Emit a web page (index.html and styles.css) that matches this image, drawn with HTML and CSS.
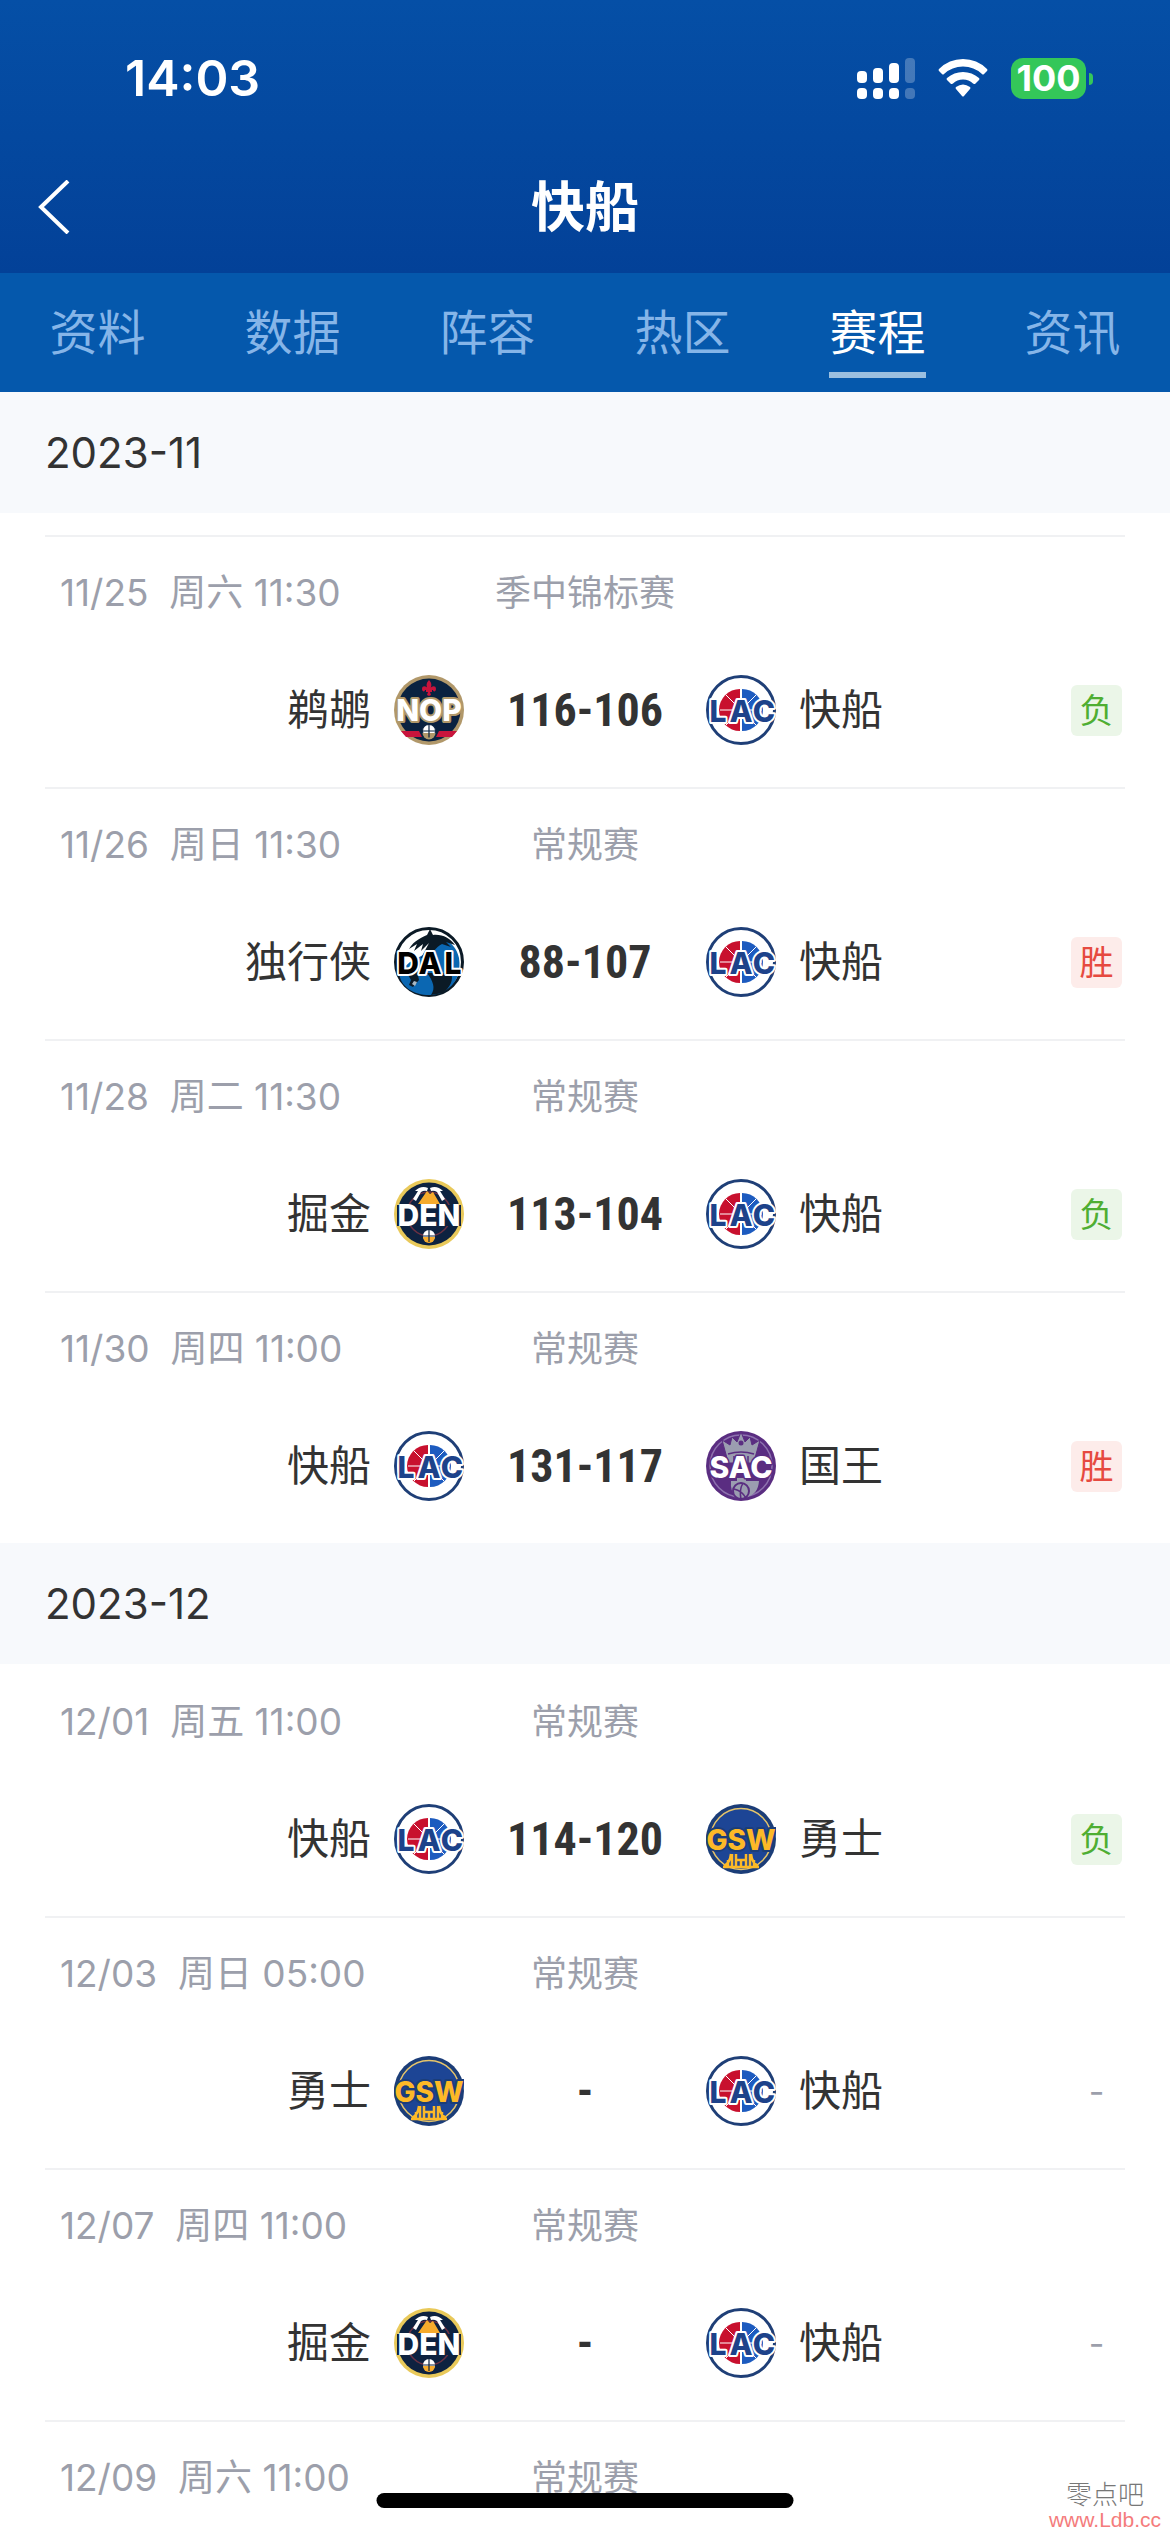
FILE: index.html
```html
<!DOCTYPE html>
<html lang="zh-CN">
  <head>
    <meta charset="UTF-8" />
    <meta name="viewport" content="width=device-width, initial-scale=1.0" />
    <title>快船 - 赛程</title>
    <link rel="stylesheet" href="styles.css">
  </head>
  <body>
    <!-- team logos -->
    <svg class="sprite" aria-hidden="true">
      <symbol id="nop" viewBox="0 0 70 70">
        <circle cx="35" cy="35" r="35" fill="#b1986a" />
        <circle cx="35" cy="35" r="31.5" fill="#0a2240" />
        <path d="M35 5c3 3 3 6 1 9c1-3 6-4 6 0c0 3-3 3-3 1h-1v2h-2l1 3l-2 1l-2-1l1-3h-2v-2h-1c0 2-3 2-3-1c0-4 5-3 6 0c-2-3-2-6 1-9z" fill="#c8143c" />
        <path d="M7 56h18l3 6H12z M63 56H45l-3 6h16z" fill="#c8143c" />
        <text x="35" y="46" class="logo-text" fill="#fff" stroke="#b1986a" stroke-width="4">NOP</text>
        <circle cx="35" cy="56" r="6.500" fill="#fff" stroke="#0a2240" />
        <path d="M28.500 58h13a6.500 6.500 0 0 1-13 0z" fill="#b1986a" />
        <path d="M35 49.500v13M28.500 56h13" fill="none" stroke="#0a2240" stroke-width="1.200" />
      </symbol>
      <symbol id="lac" viewBox="0 0 70 70">
        <circle cx="35" cy="35" r="33.5" fill="#fff" stroke="#1f3f77" stroke-width="3" />
        <path d="M34 14v42A21 21 0 0 1 34 14z" fill="#c8102e" />
        <path d="M36 14v42A21 21 0 0 0 36 14z" fill="#1d5bbf" />
        <path d="M14 35h42M20 20l30 30M50 20L20 50" stroke="#fff" stroke-width="1" />
        <text x="12 35 58" y="47" class="logo-text" fill="#1d428a" stroke="#fff" stroke-width="4">LAC</text>
      </symbol>
      <symbol id="dal" viewBox="0 0 70 70">
        <circle cx="35" cy="35" r="33.500" fill="#fff" stroke="#0b1a26" stroke-width="3" />
        <path d="M5 45C6 60 20 68 35 68c8 0 14-2 20-7c8-6 12-17 10-30c-2-9-7-15-14-19l-13 3l-9 13l-13 7z" fill="#0b67b2" />
        <path d="M36 2l3 6c9-1 17 3 22 10l-9-3l5 5l-9-3c-6 3-10 9-12 14h-9l8-15l-8 8l2-7l-9 7l3-7l-8 5c5-9 14-12 18-14z" fill="#0b1a26" />
        <path d="M13 46l10-2l2 9l-6 7l-4-2l2-5z M33 46h24c3 6-1 15-8 20l-12 2c5-7 2-14-4-22z" fill="#0b1a26" />
        <path d="M18 57l2-3 3 1-2 4z" fill="#a9b8c4" />
        <text x="14 36 59" y="47" class="logo-text" fill="#000" stroke="#fff" stroke-width="4">DAL</text>
      </symbol>
      <symbol id="den" viewBox="0 0 70 70">
        <circle cx="35" cy="35" r="35" fill="#e9c95a" />
        <circle cx="35" cy="35" r="31.500" fill="#0d2240" />
        <circle cx="35" cy="35" r="22" fill="none" stroke="#6b3042" stroke-width="1.500" />
        <path d="M24 25l9-13l3 3l3-2l7 12z" fill="#f6ab2c" />
        <path d="M21 12q6-6 13-3l-1 3q-3-1-6 1l-5 9l-3-2l5-8z M49 12q-6-6-13-3l1 3q3-1 6 1l5 9l3-2l-5-8z" fill="#fff" />
        <path d="M3 26h64v21H3z" fill="#0d2240" />
        <text x="35" y="47" class="logo-text" fill="#fff">DEN</text>
        <circle cx="35" cy="57" r="6" fill="#fff" />
        <path d="M29 58h12a6 6 0 0 1-12 0z" fill="#f6ab2c" />
        <path d="M35 51v12M29 57h12" fill="none" stroke="#0d2240" stroke-width="1.200" />
      </symbol>
      <symbol id="sac" viewBox="0 0 70 70">
        <circle cx="35" cy="35" r="35" fill="#5a2d81" />
        <circle cx="35" cy="35" r="31" fill="none" stroke="#8d72ae" stroke-width="1.500" />
        <path d="M16 9l8 5l2-8l5 5l4-10l4 10l5-5l2 8l8-5l-5 18v5H21v-5z" fill="#9b9db0" stroke="#5a2d81" />
        <path d="M22 23q13-4 26 0M28 25v7M42 25v7" fill="none" stroke="#5a2d81" stroke-width="1.500" />
        <circle cx="35" cy="12" r="2.500" fill="#5a2d81" />
        <path d="M25 50h6v-3h9v3h13q-1 14-13 16H30q-6-6-5-16z" fill="#9b9db0" />
        <circle cx="35" cy="60" r="8" fill="#9b9db0" stroke="#5a2d81" stroke-width="2" />
        <path d="M28 58q8 2 12 9M37 52q-4 7-2 16" fill="none" stroke="#5a2d81" stroke-width="1.500" />
        <text x="35" y="47" class="logo-text" fill="#fff" stroke="#5a2d81" stroke-width="3">SAC</text>
      </symbol>
      <symbol id="gsw" viewBox="0 0 70 70">
        <circle cx="35" cy="35" r="35" fill="#1b3d78" />
        <circle cx="35" cy="35" r="30.500" fill="#1d4595" stroke="#e5c46b" stroke-width="1.500" />
        <path d="M18 62q6-3 7-12M52 62q-6-3-7-12M22 56v6M48 56v6M26 50v14M30 50v14M40 50v14M44 50v14M30 56h10M17 63h36M35 56v6" fill="none" stroke="#fdb927" stroke-width="2.500" />
        <text x="35" y="46" class="logo-text wide" fill="#fdb927" stroke="#1b3d78" stroke-width="4">GSW</text>
      </symbol>
    </svg>

    <div class="app">
      <header class="header">
        <div class="status-bar">
          <time class="clock">14:03</time>
          <div class="status-icons">
            <svg class="signal" viewBox="0 0 58 41" fill="#fff" aria-hidden="true">
              <rect x="0" y="13" width="10" height="12" rx="4" />
              <rect x="16" y="10" width="10" height="15" rx="4" />
              <rect x="32" y="5" width="10" height="20" rx="4" />
              <rect x="0" y="30" width="10" height="11" rx="4" />
              <rect x="16" y="30" width="10" height="11" rx="4" />
              <rect x="32" y="30" width="10" height="11" rx="4" />
              <g opacity="0.25">
                <rect x="48" y="0" width="10" height="25" rx="4" />
                <rect x="48" y="30" width="10" height="11" rx="4" />
              </g>
            </svg>
            <svg class="wifi" viewBox="0 0 50 38" fill="#fff" aria-hidden="true">
              <path d="M1 10Q11 0 25 0T49 10Q50 11 49 12L46 15Q45 16 44 15Q36 7.500 25 7.500T6 15Q5 16 4 15L1 12Q0 11 1 10z" />
              <path d="M9 19Q16 13 25 13T41 19Q42 20 41 21L37 25Q36 25 35 24.500Q31 20.500 25 20.500T15 24.500Q14 25 13 25L9 21Q8 20 9 19z" />
              <path d="M18 28Q25 23 32 28Q33 29 32 30L26 37Q25 38 24 37L18 30Q17 29 18 28z" />
            </svg>
            <span class="battery">100</span>
          </div>
        </div>
        <div class="title-bar">
          <button class="back" type="button" aria-label="返回">
            <svg viewBox="0 0 32 54" fill="none" stroke="#fff" stroke-width="4" aria-hidden="true">
              <path d="M30 1L3 27L30 53" />
            </svg>
          </button>
          <h1>快船</h1>
        </div>
      </header>

      <nav class="tabs">
        <a href="#">资料</a>
        <a href="#">数据</a>
        <a href="#">阵容</a>
        <a href="#">热区</a>
        <a href="#" class="active" aria-current="page">赛程</a>
        <a href="#">资讯</a>
      </nav>

      <main class="schedule">
        <h2>2023-11</h2>
        <ul class="games scrolled">
          <li class="game">
            <div class="meta"><span class="date">11/25&nbsp; 周六 11:30</span><span>季中锦标赛</span></div>
            <div class="match">
              <div class="home">鹈鹕<svg class="logo"><use href="#nop" /></svg></div>
              <strong class="score">116-106</strong>
              <div class="away"><svg class="logo"><use href="#lac" /></svg>快船<span class="result loss">负</span></div>
            </div>
          </li>
          <li class="game">
            <div class="meta"><span class="date">11/26&nbsp; 周日 11:30</span><span>常规赛</span></div>
            <div class="match">
              <div class="home">独行侠<svg class="logo"><use href="#dal" /></svg></div>
              <strong class="score">88-107</strong>
              <div class="away"><svg class="logo"><use href="#lac" /></svg>快船<span class="result win">胜</span></div>
            </div>
          </li>
          <li class="game">
            <div class="meta"><span class="date">11/28&nbsp; 周二 11:30</span><span>常规赛</span></div>
            <div class="match">
              <div class="home">掘金<svg class="logo"><use href="#den" /></svg></div>
              <strong class="score">113-104</strong>
              <div class="away"><svg class="logo"><use href="#lac" /></svg>快船<span class="result loss">负</span></div>
            </div>
          </li>
          <li class="game">
            <div class="meta"><span class="date">11/30&nbsp; 周四 11:00</span><span>常规赛</span></div>
            <div class="match">
              <div class="home">快船<svg class="logo"><use href="#lac" /></svg></div>
              <strong class="score">131-117</strong>
              <div class="away"><svg class="logo"><use href="#sac" /></svg>国王<span class="result win">胜</span></div>
            </div>
          </li>
        </ul>

        <h2>2023-12</h2>
        <ul class="games">
          <li class="game">
            <div class="meta"><span class="date">12/01&nbsp; 周五 11:00</span><span>常规赛</span></div>
            <div class="match">
              <div class="home">快船<svg class="logo"><use href="#lac" /></svg></div>
              <strong class="score">114-120</strong>
              <div class="away"><svg class="logo"><use href="#gsw" /></svg>勇士<span class="result loss">负</span></div>
            </div>
          </li>
          <li class="game">
            <div class="meta"><span class="date">12/03&nbsp; 周日 05:00</span><span>常规赛</span></div>
            <div class="match">
              <div class="home">勇士<svg class="logo"><use href="#gsw" /></svg></div>
              <strong class="score">-</strong>
              <div class="away"><svg class="logo"><use href="#lac" /></svg>快船<span class="result">-</span></div>
            </div>
          </li>
          <li class="game">
            <div class="meta"><span class="date">12/07&nbsp; 周四 11:00</span><span>常规赛</span></div>
            <div class="match">
              <div class="home">掘金<svg class="logo"><use href="#den" /></svg></div>
              <strong class="score">-</strong>
              <div class="away"><svg class="logo"><use href="#lac" /></svg>快船<span class="result">-</span></div>
            </div>
          </li>
          <li class="game">
            <div class="meta"><span class="date">12/09&nbsp; 周六 11:00</span><span>常规赛</span></div>
          </li>
        </ul>
      </main>

      <div class="home-indicator"></div>
      <div class="watermark">
        <span class="site-name">零点吧</span>
        <span class="site-url">www.Ldb.cc</span>
      </div>
    </div>
  </body>
</html>
```
FILE: styles.css
```css
:root {
  --header-top: #054fa6;
  --header-bottom: #034198;
  --tabs: #0558ac;
  --text: #333;
  --muted: #9c9fab;
  --line: #f0f1f3;
  --section: #f7f9fc;
  --win: #e64a40;
  --loss: #4fae33;
}

* {
  margin: 0;
  padding: 0;
  box-sizing: border-box;
}

body {
  background: #fff;
  color: var(--text);
  font-family: Inter, "Noto Sans CJK SC", sans-serif;
}

.sprite {
  display: none;
}

.logo-text {
  font-family: Inter, sans-serif;
  font-size: 30px;
  font-weight: 800;
  text-anchor: middle;
  paint-order: stroke;
  stroke-linejoin: round;
}

.logo-text.wide {
  font-size: 28px;
}

.app {
  position: relative;
  display: flex;
  flex-direction: column;
  height: 100vh;
  overflow: hidden;
}

/* header */
.header {
  background: linear-gradient(var(--header-top), var(--header-bottom));
  color: #fff;
}

.status-bar {
  display: flex;
  justify-content: space-between;
  align-items: center;
  height: 141px;
  padding: 15px 78px 0 125px;
}

.clock {
  font-size: 50px;
  font-weight: 600;
}

.status-icons {
  display: flex;
  align-items: center;
  gap: 23px;
}

.signal {
  width: 58px;
  height: 41px;
}

.wifi {
  width: 50px;
  height: 38px;
}

.battery {
  position: relative;
  width: 75px;
  margin-right: 6px;
  border-radius: 12px;
  background: #34c759;
  font-size: 36px;
  font-weight: 700;
  line-height: 41px;
  text-align: center;
}

.battery::after {
  content: "";
  position: absolute;
  top: 15px;
  right: -7px;
  width: 4px;
  height: 12px;
  border-radius: 0 4px 4px 0;
  background: #34c759;
}

.title-bar {
  display: grid;
  grid-template-columns: 1fr auto 1fr;
  align-items: center;
  height: 132px;
  padding: 0 38px;
}

.back {
  display: flex;
  width: 32px;
  border: none;
  background: none;
  cursor: pointer;
}

.back svg {
  width: 32px;
  height: 54px;
}

h1 {
  padding-top: 2px;
  font-size: 54px;
  font-weight: 700;
  line-height: 80px;
}

/* tabs */
.tabs {
  display: grid;
  grid-template-columns: repeat(6, 1fr);
  justify-items: center;
  height: 119px;
  background: var(--tabs);
}

.tabs a {
  height: 105px;
  border-bottom: 6px solid transparent;
  color: #86b5e8;
  font-size: 48px;
  line-height: 120px;
  text-decoration: none;
}

.tabs .active {
  border-color: #9bbfe0;
  color: #fff;
}

/* schedule */
.schedule {
  flex: 1;
  min-height: 0;
}

h2 {
  padding: 0 45px;
  background: var(--section);
  font-size: 42px;
  font-weight: 400;
  line-height: 121px;
}

.games {
  padding: 0 45px;
  list-style: none;
}

.games.scrolled {
  padding-top: 22px;
}

.game {
  height: 252px;
  border-top: 2px solid var(--line);
}

.games:not(.scrolled) .game:first-child {
  border-color: transparent;
}

.meta {
  display: grid;
  grid-template-columns: 1fr auto 1fr;
  padding: 28px 15px 0;
  color: var(--muted);
  font-size: 36px;
  line-height: 56px;
}

.date {
  font-size: 37px;
}

.match {
  display: grid;
  grid-template-columns: 1fr 242px 1fr;
  align-items: center;
  height: 70px;
  margin-top: 54px;
  font-size: 42px;
  line-height: 70px;
}

.home,
.away {
  display: flex;
  align-items: center;
  gap: 23px;
}

.home {
  justify-content: flex-end;
}

.logo {
  width: 70px;
  height: 70px;
}

.score {
  font-family: "Roboto Condensed", Roboto, sans-serif;
  font-size: 46px;
  font-weight: 700;
  text-align: center;
}

.result {
  width: 51px;
  margin-left: auto;
  margin-right: 3px;
  border-radius: 6px;
  color: var(--muted);
  font-size: 34px;
  line-height: 51px;
  text-align: center;
}

.win {
  background: #fdecea;
  color: var(--win);
}

.loss {
  background: #ebf6e8;
  color: var(--loss);
}

/* overlays */
.home-indicator {
  position: absolute;
  bottom: 24px;
  left: 50%;
  width: 417px;
  height: 15px;
  border-radius: 8px;
  background: #000;
  transform: translateX(-50%);
}

.watermark {
  position: absolute;
  right: 9px;
  bottom: 0;
  display: flex;
  flex-direction: column;
  align-items: center;
  line-height: 25px;
}

.site-name {
  color: #777;
  font-size: 26px;
  font-weight: 300;
}

.site-url {
  color: #f47c7c;
  font-family: "Liberation Sans", sans-serif;
  font-size: 21px;
}
```
